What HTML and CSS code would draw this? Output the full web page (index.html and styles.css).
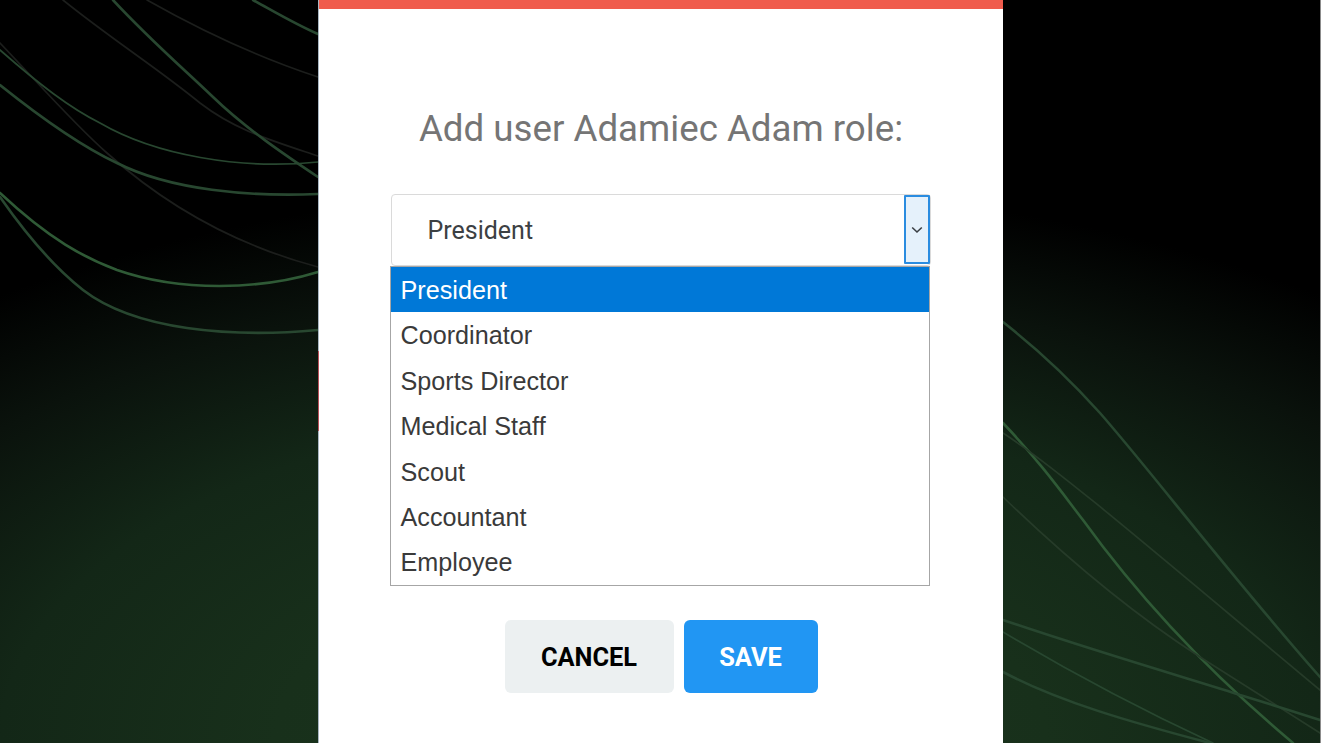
FILE: index.html
```html
<!DOCTYPE html>
<html lang="en">
<head>
<meta charset="utf-8">
<title>Add user role</title>
<link rel="stylesheet" href="styles.css">
</head>
<body>
<svg class="backdrop" viewBox="0 0 1321 743" width="1321" height="743" aria-hidden="true">
  <g fill="none" stroke-linecap="round">
    <path class="line dark" d="M63 0C110 38 160 70 200 103C235 130 270 140 318 156"/>
    <path class="line dark" d="M147 0C200 30 260 58 318 77"/>
    <path class="line dark" d="M0 43C40 85 75 125 107 153C165 205 235 245 318 267"/>
    <path class="line mid wide" d="M253 0C275 12 295 24 318 34"/>
    <path class="line mid wide" d="M113 0C150 40 185 70 213 97C245 128 285 155 318 177"/>
    <path class="line mid" d="M0 50C40 85 70 108 100 123C155 155 240 170 318 162"/>
    <path class="line mid wide" d="M0 85C50 125 85 148 117 163C170 190 250 197 318 194"/>
    <path class="line bright wide" d="M0 193C50 240 85 258 117 270C180 292 260 290 318 272"/>
    <path class="line mid wide" d="M0 197C30 240 55 268 83 290C135 330 230 338 318 330"/>

    <path class="line mid wide" d="M1003 322C1045 355 1075 385 1100 413C1150 470 1230 575 1320 677"/>
    <path class="line bright wide" d="M1003 423C1040 462 1060 490 1083 520C1130 585 1200 665 1293 743"/>
    <path class="line faint" d="M1003 433C1060 470 1170 565 1320 690"/>
    <path class="line faint" d="M1003 497C1060 552 1130 612 1200 657C1240 682 1280 708 1320 733"/>
    <path class="line mid wide" d="M1003 620C1100 653 1210 685 1240 695C1270 704 1295 712 1320 720"/>
    <path class="line mid" d="M1003 632C1050 660 1120 700 1213 743"/>
    <path class="line mid wide" d="M1003 672C1060 702 1130 722 1210 743"/>
  </g>
</svg>
<div class="edge"></div>

<main class="modal">
  <div class="accent"></div>
  <span class="sliver"></span>
  <h1 class="title">Add user Adamiec Adam role:</h1>
  <div class="select">
    <span class="select-value">President</span>
    <span class="select-arrow">
      <svg viewBox="0 0 12 8" width="12" height="8" aria-hidden="true"><path d="M1.2 1.5L6 6L10.8 1.5" fill="none" stroke="#3a3f44" stroke-width="1.6"/></svg>
    </span>
    <ul class="options">
      <li class="option selected">President</li>
      <li class="option">Coordinator</li>
      <li class="option">Sports Director</li>
      <li class="option">Medical Staff</li>
      <li class="option">Scout</li>
      <li class="option">Accountant</li>
      <li class="option">Employee</li>
    </ul>
  </div>
  <div class="actions">
    <button class="btn btn-cancel" type="button">Cancel</button>
    <button class="btn btn-save" type="button">Save</button>
  </div>
</main>
</body>
</html>
```
FILE: styles.css
```css
* { box-sizing: border-box; }
html, body { height: 100%; }
body {
  margin: 0;
  height: 743px;
  overflow: hidden;
  background: radial-gradient(ellipse 1100px 560px at 50% 100%, #1b361e 0, #18301b 35%, #132717 60%, #0a120c 82%, #000 100%);
  font-family: Roboto, "Liberation Sans", sans-serif;
}
.backdrop { position: absolute; left: 0; top: 0; filter: blur(0.4px); }
.line { stroke-width: 1.7; }
.line.wide { stroke-width: 2.6; }
.dark { stroke: #1c1e1c; }
.faint { stroke: #263b29; }
.mid { stroke: #284730; }
.bright { stroke: #2f5a36; }
.edge { position: absolute; top: 0; right: 0; width: 1px; height: 100%; background: #8c8c8c; }

.modal {
  position: relative;
  width: 685px;
  height: 743px;
  margin-left: 318px;
  background: #fff;
  border-left: 1px solid #a8b6c2;
}
.accent { height: 9px; background: #f05c4d; }
.sliver { position: absolute; left: -1px; top: 351px; width: 1px; height: 80px; background: #b8505a; }
.title {
  margin: 97px 0 0;
  height: 46px;
  font-size: 36.7px;
  line-height: 46px;
  font-weight: 400;
  text-align: center;
  color: #757575;
}
.select {
  position: relative;
  display: flex;
  align-items: center;
  justify-content: space-between;
  width: 540px;
  height: 72px;
  margin: 42px 0 0 72px;
  padding: 0 0 0 35.5px;
  border: 1px solid #dadada;
  border-radius: 4px;
}
.select-value { font-size: 25px; color: #3c4043; }
.select-arrow {
  display: flex;
  align-items: center;
  justify-content: center;
  align-self: stretch;
  width: 26px;
  margin-bottom: 1px;
  background: #e5f1fb;
  border: 2px solid #2a8ce0;
  border-radius: 1px;
}
.options {
  position: absolute;
  left: -2px;
  top: 71px;
  width: 540px;
  margin: 0;
  padding: 0;
  list-style: none;
  background: #fff;
  border: 1px solid #a6a6a6;
}
.option {
  height: 45.4px;
  padding-left: 9.5px;
  font-family: "Liberation Sans", Arial, sans-serif;
  font-size: 25.2px;
  line-height: 46px;
  color: #3a3a3a;
}
.option.selected { background: #0078d7; color: #fff; }
.actions {
  display: flex;
  justify-content: center;
  gap: 10px;
  margin-top: 354px;
}
.btn {
  height: 73px;
  padding: 1px 0 0;
  border: 0;
  border-radius: 6px;
  font-family: Roboto, "Liberation Sans", sans-serif;
  font-size: 25.4px;
  font-weight: 700;
  text-transform: uppercase;
}
.btn-cancel { width: 169px; background: #ecf0f1; color: #000; }
.btn-save { width: 134px; background: #2196f3; color: #fff; }
```
